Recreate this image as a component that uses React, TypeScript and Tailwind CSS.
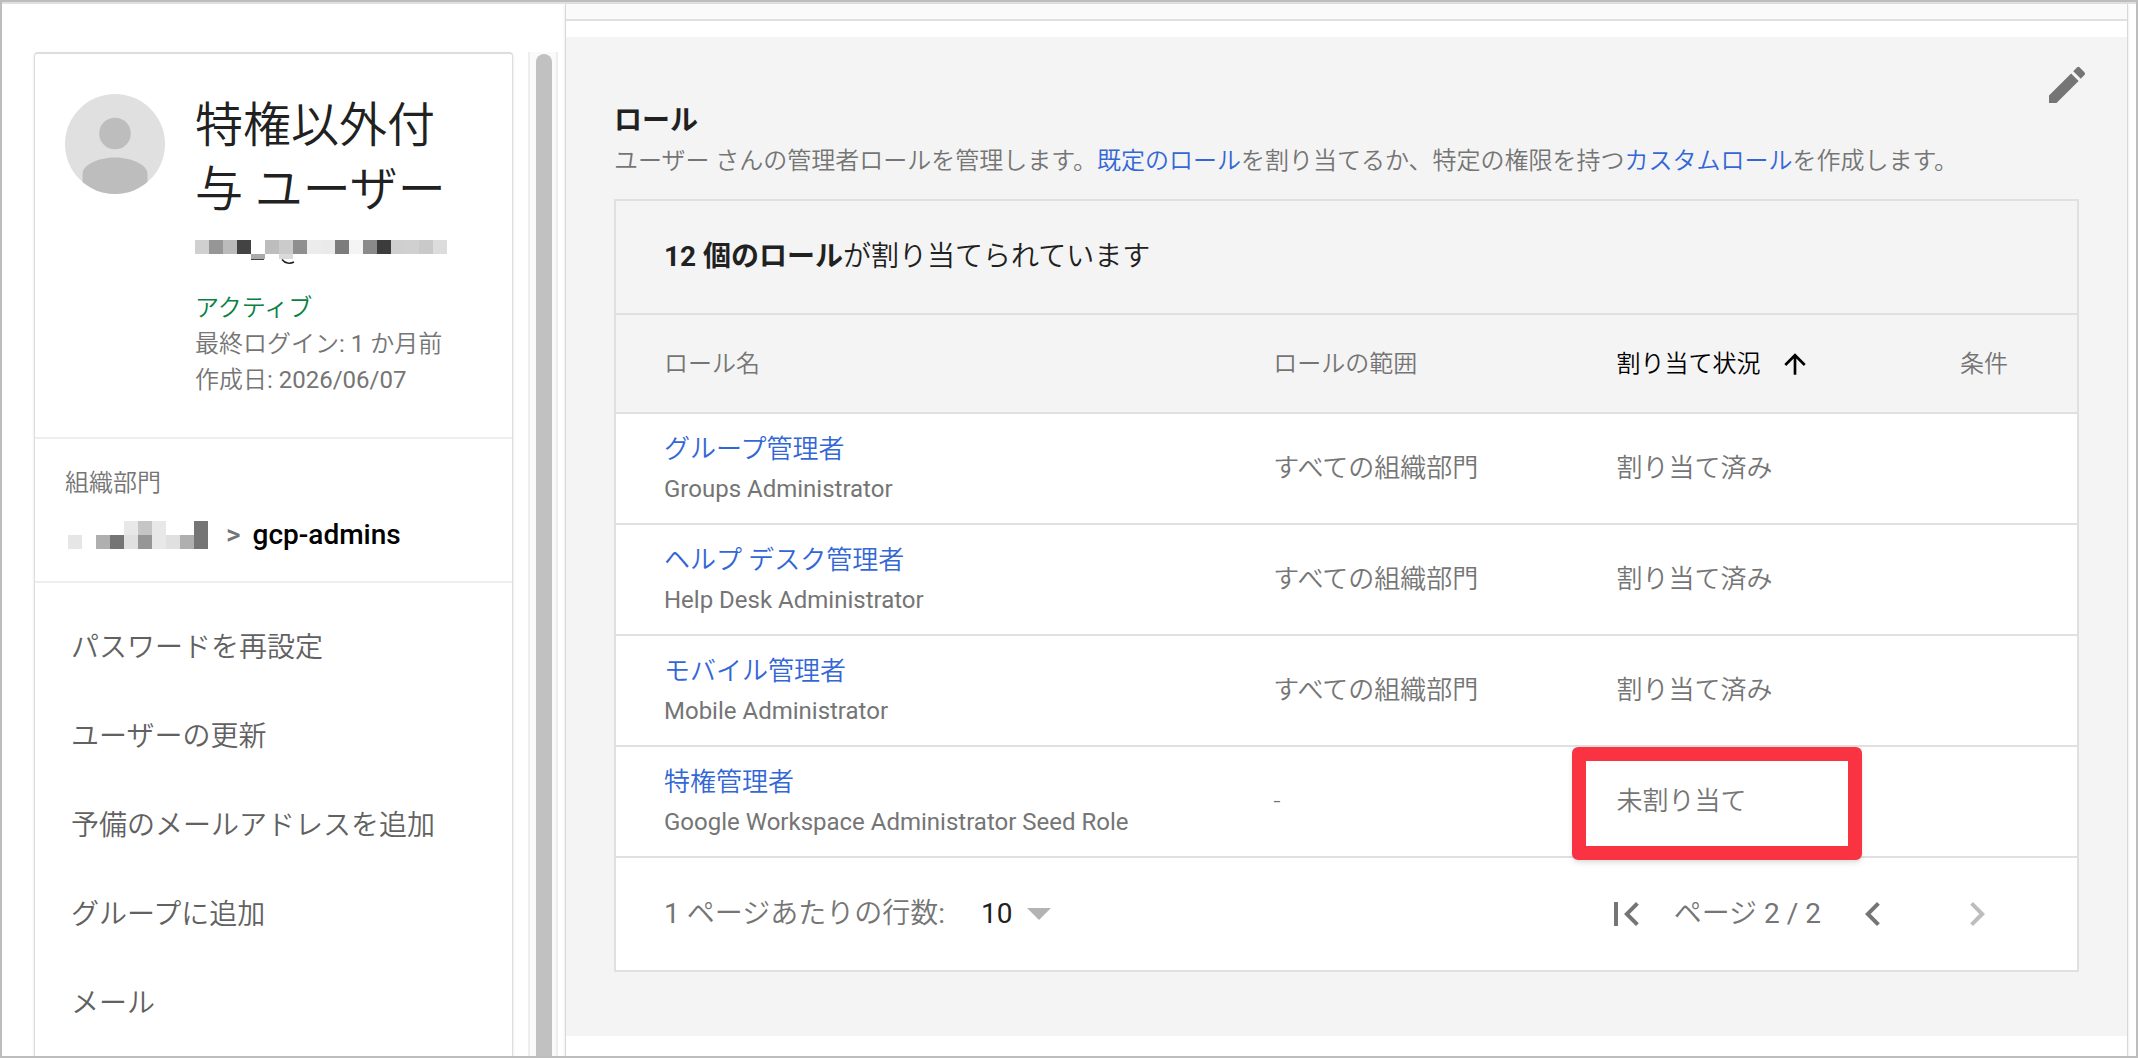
import { MdArrowUpward, MdChevronLeft, MdChevronRight, MdEdit, MdFirstPage } from 'react-icons/md'

const roles = [
  { name: 'グループ管理者', en: 'Groups Administrator', scope: 'すべての組織部門', status: '割り当て済み' },
  { name: 'ヘルプ デスク管理者', en: 'Help Desk Administrator', scope: 'すべての組織部門', status: '割り当て済み' },
  { name: 'モバイル管理者', en: 'Mobile Administrator', scope: 'すべての組織部門', status: '割り当て済み' },
  { name: '特権管理者', en: 'Google Workspace Administrator Seed Role', scope: '-', status: '未割り当て', highlight: true },
]

const actions = [
  'パスワードを再設定',
  'ユーザーの更新',
  '予備のメールアドレスを追加',
  'グループに追加',
  'メール',
]

const emailCells = [
  '#d0d0d0', '#969696', '#bbbbbb', '#434343', '#ffffff', '#bdbdbd', '#cbcbcb', '#8f8f8f', '#ececec',
  '#eaeaea', '#7c7c7c', '#f4f4f4', '#8a8a8a', '#3c3c3c', '#cfcfcf', '#d0d0d0', '#c9c9c9', '#dcdcdc',
]

const orgCells = [
  ['#ffffff', '#ffffff', '#ffffff', '#ffffff', '#e8e8e8', '#c5c5c5', '#e8e8e8', '#ffffff', '#ffffff', '#757575'],
  ['#e6e6e6', '#ffffff', '#afafaf', '#757575', '#e0e0e0', '#969696', '#e8e8e8', '#e0e0e0', '#afafaf', '#757575'],
]

function MaskedEmail() {
  return (
    <svg width="252" height="26" viewBox="0 0 252 26" role="img" aria-label="メールアドレス" shapeRendering="crispEdges">
      {emailCells.map((fill, i) => (
        <rect key={i} x={i * 14} y="0" width="14" height="14" fill={fill} />
      ))}
      <rect x="56" y="14" width="14" height="5" fill="#aaaaaa" />
      <rect x="56" y="19" width="13" height="1" fill="#444444" />
      <rect x="84" y="14" width="14" height="5" fill="#dadada" />
      <path d="M87 19.5c3 4 8 4.500 12 2.500" fill="none" stroke="#222" strokeWidth="1.500" shapeRendering="auto" />
    </svg>
  )
}

function MaskedOrg() {
  return (
    <svg width="140" height="28" viewBox="0 0 140 28" role="img" aria-label="親組織部門" shapeRendering="crispEdges">
      {orgCells.map((row, y) =>
        row.map((fill, x) => <rect key={`${x}-${y}`} x={x * 14} y={y * 14} width="14" height="14" fill={fill} />)
      )}
    </svg>
  )
}

function Avatar() {
  return (
    <svg className="shrink-0" width="100" height="100" viewBox="0 0 100 100" aria-hidden="true">
      <clipPath id="avatar">
        <circle cx="50" cy="50" r="50" />
      </clipPath>
      <g clipPath="url(#avatar)">
        <rect width="100" height="100" fill="#e0e0e0" />
        <circle cx="50" cy="39.500" r="15.800" fill="#bdbdbd" />
        <path d="M17.500 100V80C17.500 70 35 63.500 50 63.500S82.500 70 82.500 80V100Z" fill="#bdbdbd" />
      </g>
    </svg>
  )
}

function UserCard() {
  return (
    <div className="w-[479px] shrink-0 rounded-t border-x border-t-2 border-[#dddddd] bg-white shadow">
      <div className="flex gap-[30px] pt-10 pr-6 pb-[39px] pl-[30px]">
        <Avatar />
        <div>
          <h1 className="text-[48px] leading-[64px] font-[350] text-[#212121]">
            特権以外付
            <br />与 ユーザー
          </h1>
          <div className="mt-[18px] h-[50px]">
            <MaskedEmail />
          </div>
          <div className="text-[24px] leading-[36px] font-[350] text-[#757575]">
            <p className="text-[#0b8043]">アクティブ</p>
            <p>
              最終ログイン<span className="font-normal">: 1 </span>か月前
            </p>
            <p>
              作成日<span className="font-normal">: 2026/06/07</span>
            </p>
          </div>
        </div>
      </div>
      <div className="border-y-2 border-[#eeeeee] px-[30px] pt-[26px] pb-7">
        <h2 className="text-[24px] leading-[36px] font-[350] text-[#757575]">組織部門</h2>
        <div className="mt-4 flex items-center pl-[3px] text-[28px] leading-[36px] font-medium">
          <MaskedOrg />
          <span className="ml-[18px] text-[#757575]">&gt;</span>
          <span className="ml-3 text-black">gcp-admins</span>
        </div>
      </div>
      <ul className="pt-5">
        {actions.map((label) => (
          <li key={label}>
            <button className="block h-[89px] w-full px-9 text-left text-[28px] font-[350] text-[#616161]">{label}</button>
          </li>
        ))}
      </ul>
    </div>
  )
}

function RolesTable() {
  return (
    <div className="mx-12 mt-[18px] mb-16 border-2 border-[#e0e0e0]">
      <div className="flex h-28 items-center px-12 text-[28px] text-[#212121]">
        <p className="font-[350]">
          <strong className="font-bold">12 個のロール</strong>が割り当てられています
        </p>
      </div>
      <table className="w-full table-fixed border-separate border-spacing-0 text-left">
        <thead className="text-[24px] text-[#757575]">
          <tr className="h-[99px]">
            <th className="w-[41.7%] border-t-2 border-[#e0e0e0] pl-12 font-[350]">ロール名</th>
            <th className="w-[23.5%] border-t-2 border-[#e0e0e0] pl-12 font-[350]">ロールの範囲</th>
            <th className="w-[23.5%] border-t-2 border-[#e0e0e0] pl-12 font-[350] text-black">
              <button className="flex items-center gap-[18px]">
                割り当て状況
                <MdArrowUpward size={32} />
              </button>
            </th>
            <th className="border-t-2 border-[#e0e0e0] pl-12 font-[350]">条件</th>
          </tr>
        </thead>
        <tbody className="bg-white text-[26px] font-[350] text-[#757575]">
          {roles.map((role) => (
            <tr key={role.en} className="h-[111px]">
              <td className="border-t-2 border-[#e0e0e0] pl-12">
                <a href="#" className="block leading-[40px] text-[#3367d6]">{role.name}</a>
                <span className="block text-[24px] leading-[40px] font-normal">{role.en}</span>
              </td>
              <td className="border-t-2 border-[#e0e0e0] pl-12">{role.scope}</td>
              <td className="relative border-t-2 border-[#e0e0e0] pl-12">
                {role.status}
                {role.highlight && (
                  <div className="absolute top-0 left-[3px] h-[113px] w-[290px] rounded-md border-[14px] border-[#fa3342] shadow-md" />
                )}
              </td>
              <td className="border-t-2 border-[#e0e0e0] pl-12" />
            </tr>
          ))}
        </tbody>
      </table>
      <div className="flex h-[114px] items-center justify-between border-t-2 border-[#e0e0e0] bg-white pr-[76px] pl-12 text-[28px] font-[350] text-[#757575]">
        <div className="flex items-center">
          <label htmlFor="rows">
            <span className="font-normal">1 </span>ページあたりの行数<span className="font-normal">:</span>
          </label>
          <div className="relative ml-9 flex items-center">
            <select id="rows" className="w-[70px] appearance-none bg-transparent font-normal text-[#212121]">
              <option>10</option>
            </select>
            <svg className="pointer-events-none absolute right-0" width="24" height="12" viewBox="0 0 24 12" fill="#b3b3b3">
              <path d="M0 0h24L12 12z" />
            </svg>
          </div>
        </div>
        <div className="flex items-center">
          <button aria-label="最初のページ">
            <MdFirstPage size={48} />
          </button>
          <span className="mr-7 ml-6">
            ページ<span className="font-normal"> 2 / 2</span>
          </span>
          <button aria-label="前のページ">
            <MdChevronLeft size={48} />
          </button>
          <button aria-label="次のページ" disabled className="ml-14 text-[#bdbdbd]">
            <MdChevronRight size={48} />
          </button>
        </div>
      </div>
    </div>
  )
}

export default function App() {
  return (
    <div
      lang="ja"
      className="h-screen overflow-hidden border-2 border-[#bdbdbd] bg-white font-[Roboto,'Noto_Sans_CJK_JP',sans-serif]"
    >
      <div className="flex h-full border-t-2 border-[#e0e0e0]">
        <aside className="flex w-[563px] shrink-0 gap-[15px] overflow-hidden pt-12 pl-8">
          <UserCard />
          {/* Scrollbar */}
          <div className="w-[30px] border-x-2 border-[#eeeeee] bg-[#fafafa] px-1.5 pt-0.5">
            <div className="h-full w-4 rounded-t-full bg-[#c1c1c1]" />
          </div>
        </aside>
        <main className="mr-2 min-w-0 grow border-x border-[#d8d8d8] shadow">
          <div className="h-[17px] border-b-2 border-[#e0e0e0] bg-[#fafafa]" />
          <section className="mt-4 flow-root bg-[#f4f4f4]">
            <header className="flex items-start justify-between pt-6 pr-9 pl-12">
              <div className="pt-10 leading-[40px]">
                <h2 className="text-[28px] font-bold text-[#212121]">ロール</h2>
                <p className="text-[24px] font-[350] text-[#757575]">
                  ユーザー さんの管理者ロールを管理します。<a href="#" className="text-[#3367d6]">既定のロール</a>
                  を割り当てるか、特定の権限を持つ<a href="#" className="text-[#3367d6]">カスタムロール</a>を作成します。
                </p>
              </div>
              <button aria-label="編集" className="text-[#757575]">
                <MdEdit size={48} />
              </button>
            </header>
            <RolesTable />
          </section>
        </main>
      </div>
    </div>
  )
}
